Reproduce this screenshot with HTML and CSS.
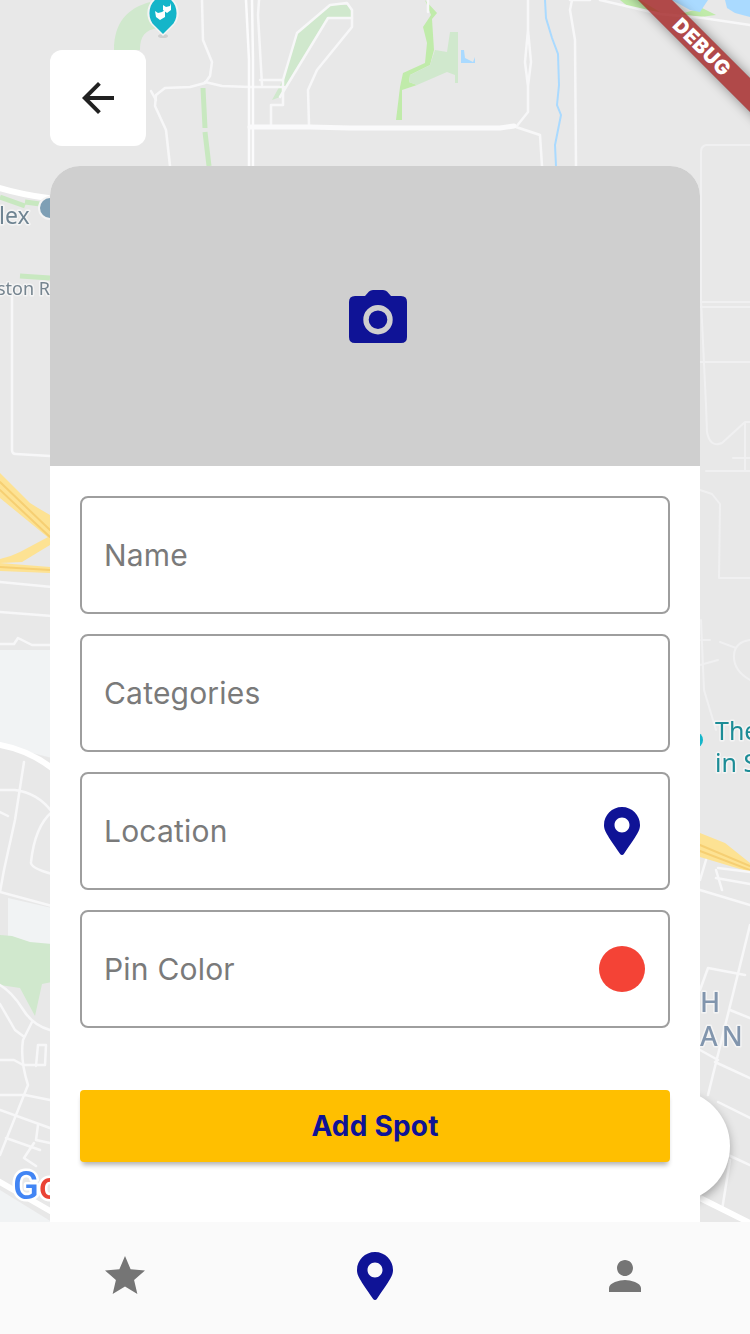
FILE: index.html
```html
<!DOCTYPE html>
<html lang="en">
<head>
<meta charset="utf-8">
<title>Add Spot</title>
<link rel="stylesheet" href="styles.css">
</head>
<body>
<div class="app">
  <svg class="map" viewBox="0 0 750 1334" width="750" height="1334" aria-hidden="true">
    <rect class="land" width="750" height="1334"/>
    <path class="pale" d="M0 650H52V758L0 745Z"/>
    <path class="pale" d="M8 898L52 908V962H8Z"/>
    <path class="pale" d="M0 1190L52 1222H0Z"/>

    <!-- parks -->
    <path class="park" d="M150 2C128 8 114 22 114 50H140C140 36 145 30 158 28Z"/>
    <path class="park" d="M272 100L283 80L297 33L330 5H350L352 18H328L280 97Z"/>
    <path class="parkline" d="M203 88L205 128M205 132L209 166"/>
    <path class="park-bright" d="M425 0L437 13L432 19L434 50L430 65L410 75L409 82L417 85L402 90L402 120L396 120L400 87L403 73L425 63L427 43L423 27L431 15Z"/>
    <path class="park" d="M450 32H458V83H455V75L447 72L417 85L409 82L410 75L430 65L435 50L447 52Z"/>
    <path class="park" d="M0 935L12 936L30 942L52 944V982L42 984L35 1016L20 988L0 985Z"/>
    <path class="park-bright" d="M620 0H640L660 12L630 8Z"/>
    <path class="park-bright" d="M680 14L702 8L716 15L700 17Z"/>
    <path class="water" d="M672 0H708L700 12L690 10Z"/>
    <path class="water" d="M725 0H750V17L735 13L727 8Z"/>
    <path class="parkline" d="M0 197L25 206M25 202L48 205M20 276L50 278"/>

    <!-- water -->
    <path class="river" d="M545 0L546 18L552 38L558 54L559 85L557 105L561 115L559 125L555 145L556 166"/>
    <path class="water" d="M461 50H464L465 58L473 62L475 57L475 63H461Z"/>

    <!-- minor roads -->
    <path class="road" d="M202 0L203 40L212 62L210 76L205 83L190 87L165 88L156 95L155 106L166 130L170 166"/>
    <path class="road" d="M151 91L156 100M205 82L222 86L250 87H284M259 0L258 15L262 85M283 80V105H271V125M309 125L308 90L317 70L352 27V10L347 3L330 5L297 33L283 80"/>
    <path class="road" d="M352 18H328L280 97M260 80H283M428 12V0"/>
    <path class="road" d="M528 0V30L525 62L528 86L528 112L516 127L540 135L542 166M528 30L531 62L528 86"/>
    <path class="road" d="M572 0L570 10L575 40L576 166M570 0H590M600 0L660 14L703 18L750 25"/>
    <path class="road-thin" d="M750 145H706Q701 146 701 152V300L706 405L707 432Q710 448 722 443L745 422H750M745 422V471M706 471H750M733 458H750"/>
    <path class="road-thin" d="M700 302H750M700 307H750M700 362H750"/>
    <path class="road-thin" d="M700 490L712 494L720 504L719 578H750M701 620L704 690L716 730M701 640L710 640M750 640Q735 642 734 655Q733 670 750 680M720 642L736 648M700 665L718 660"/>

    <!-- main roads -->
    <path class="road-main" d="M246 0L249 60L249 166M252 0L253 60L253 166"/>
    <path class="road-wide" d="M250 127H310L350 128H500L514 126"/>
    <path class="road-major" d="M0 188Q20 194 48 198"/>
    <path class="road" d="M12 296V450Q12 454 16 454L50 456"/>

    <!-- yellow highway -->
    <path class="hw-fill" d="M0 473L30 503L38 508L50 515V539L0 498Z"/>
    <path class="hw-fill" d="M0 559Q10 557 20 552L50 536V545L22 562L0 563Z"/>
    <path class="hw-fill" d="M0 563L50 567V573L0 571Z"/>
    <path class="hw-core" d="M0 482L50 530M0 490L50 537M0 567L50 570"/>
    <path class="hw-fill" d="M700 833L725 843L750 863V872L700 857Z"/>
    <path class="hw-core" d="M700 845L750 866M700 851L750 870"/>

    <path class="road" d="M0 582L52 587M0 612L52 616M0 644H14L18 638L32 645H52"/>

    <!-- lower left grid -->
    <path class="road-major" d="M0 745Q28 750 52 768"/>
    <path class="road" d="M24 762L15 820L4 870L0 892M0 790L15 790Q38 793 52 812M0 812L8 816M52 812Q35 826 31 862Q30 868 52 874M0 892L52 906"/>
    <path class="road" d="M0 985Q12 992 22 1008Q32 1025 50 1030M32 1022L23 1040Q20 1060 28 1085L0 1155M0 1004L15 1030L23 1036M0 1060H14L23 1065H45L46 1045L38 1045L36 1066M0 1095H25L50 1100M0 1110L50 1128M38 1125L36 1140L50 1143M6 1138L40 1150M34 1143L24 1158L36 1166"/>
    <path class="road-major" d="M0 1182L52 1212"/>

    <!-- lower right grid -->
    <path class="road" d="M700 890L750 905M750 925L708 1095M745 975L708 968L700 990M730 1010L750 1018M700 1050L718 1060L715 1062L750 1078M718 1102L750 1118M730 1160L722 1210M728 1155L750 1165M700 880L706 860M716 870L722 890"/>
    <path class="road" d="M718 868L750 872M716 878L750 884"/>
    <path class="road-major" d="M700 1198L752 1224"/>

    <!-- pins and labels -->
    <ellipse class="pin-shadow" cx="163" cy="36" rx="5" ry="2"/>
    <path class="pin-halo" d="M163 36L154 27C142 18 147 -4 163 -4S184 18 172 27Z"/>
    <path class="pin-teal" d="M163 34L155 26C145 18 149 -3 163 -3S181 18 171 26Z"/>
    <path class="pin-face" d="M155 11L158 13L162 12L165 10V17L160 20L156 17ZM163 5L166 7L170 6L171 3V10L167 13L163 10Z"/>
    <circle class="poi-halo" cx="50" cy="208" r="12"/>
    <circle class="poi" cx="50" cy="208" r="10"/>
    <circle class="poi-teal" cx="695" cy="740" r="8"/>
    <text class="label label-dark" x="-1" y="224">lex</text>
    <text class="label label-small" x="-3" y="295">ston R</text>
    <text class="label label-teal" x="715" y="740">The</text>
    <text class="label label-teal" x="715" y="772">in S</text>
    <text class="label label-blue" x="700" y="1012">H</text>
    <text class="label label-blue" x="700" y="1046">AN</text>
    <text class="logo" x="13" y="1199"><tspan class="logo-g">G</tspan><tspan class="logo-o">o</tspan></text>
  </svg>

  <div class="fab"></div>

  <main class="main">
    <button class="back" type="button" aria-label="Back">
      <svg class="back-icon" viewBox="0 0 24 24"><path d="M20 11H7.83l5.59-5.59L12 4l-8 8 8 8 1.41-1.41L7.83 13H20v-2z"/></svg>
    </button>
    <section class="card">
      <div class="photo">
        <svg class="camera" viewBox="0 0 58 53">
          <path class="camera-body" d="M16 6L20 1.6Q21.5 0 24 0H34Q36.500 0 38 1.600L42 6H52Q58 6 58 12V47Q58 53 52 53H6Q0 53 0 47V12Q0 6 6 6Z"/>
          <circle class="camera-ring" cx="29" cy="29.700" r="12"/>
        </svg>
      </div>
      <form class="form">
        <div class="field"><span class="field-label">Name</span></div>
        <div class="field"><span class="field-label">Categories</span></div>
        <div class="field">
          <span class="field-label">Location</span>
          <span class="field-icon">
            <svg class="pin" viewBox="0 0 384 512"><path d="M172.268 501.670C26.970 291.031 0 252.117 0 192 0 85.961 85.961 0 192 0s192 85.961 192 192c0 60.117-26.970 99.031-172.268 309.670-9.535 13.774-29.930 13.773-39.464 0zM192 272c44.183 0 80-35.817 80-80s-35.817-80-80-80-80 35.817-80 80 35.817 80 80 80z"/></svg>
          </span>
        </div>
        <div class="field">
          <span class="field-label">Pin Color</span>
          <span class="field-icon"><span class="color-dot"></span></span>
        </div>
        <button class="submit" type="button">Add Spot</button>
      </form>
    </section>
  </main>

  <nav class="nav">
    <svg class="nav-icon" viewBox="0 0 24 24"><path d="M12 17.270L18.180 21l-1.640-7.030L22 9.240l-7.190-.610L12 2 9.190 8.630 2 9.240l5.460 4.730L5.820 21z"/></svg>
    <svg class="pin nav-pin" viewBox="0 0 384 512"><path d="M172.268 501.670C26.970 291.031 0 252.117 0 192 0 85.961 85.961 0 192 0s192 85.961 192 192c0 60.117-26.970 99.031-172.268 309.670-9.535 13.774-29.930 13.773-39.464 0zM192 272c44.183 0 80-35.817 80-80s-35.817-80-80-80-80 35.817-80 80 35.817 80 80 80z"/></svg>
    <svg class="nav-icon" viewBox="0 0 24 24"><path d="M12 12c2.210 0 4-1.790 4-4s-1.790-4-4-4-4 1.790-4 4 1.790 4 4 4zm0 2c-2.670 0-8 1.340-8 4v2h16v-2c0-2.660-5.330-4-8-4z"/></svg>
  </nav>

  <div class="banner-clip"><div class="banner">DEBUG</div></div>
</div>
</body>
</html>
```

FILE: styles.css
```css
* { box-sizing: border-box; }

html, body {
  margin: 0;
  padding: 0;
}

body {
  width: 750px;
  height: 1334px;
  overflow: hidden;
  font-family: Inter, "Liberation Sans", sans-serif;
}

.app {
  position: relative;
  width: 750px;
  height: 1334px;
  display: flex;
  flex-direction: column;
  overflow: hidden;
  background: #e8e8e8;
}

/* Map backdrop */
.map {
  position: absolute;
  inset: 0;
  display: block;
  filter: blur(0.6px);
}

.land { fill: #e8e8e8; }
.pale { fill: #f1f3f4; }
.park { fill: #d0e8cd; }
.park-bright { fill: #c0ebaa; }
.parkline { fill: none; stroke: #c8e8c0; stroke-width: 5; }
.water { fill: #aadaff; }
.river { fill: none; stroke: #aadaff; stroke-width: 2; }

.road, .road-thin, .road-main, .road-wide, .road-major, .hw-core {
  fill: none;
  stroke-linecap: round;
  stroke-linejoin: round;
}

.road { stroke: #f7f7f8; stroke-width: 2.500; }
.road-thin { stroke: #f0f0f1; stroke-width: 2; }
.road-main { stroke: #fbfbfc; stroke-width: 2.500; }
.road-wide { stroke: #fafafb; stroke-width: 5; }
.road-major { stroke: #ffffff; stroke-width: 6; }
.hw-fill { fill: #fde293; }
.hw-core { stroke: #f6cf73; stroke-width: 2; }

.pin-shadow { fill: #cfcfcf; }
.pin-halo { fill: #f4f4f4; }
.pin-teal { fill: #14b5c9; }
.pin-face { fill: #ffffff; }
.poi-halo { fill: #f4f4f4; }
.poi { fill: #7e9fb5; }
.poi-teal { fill: #14b5c9; }

.label {
  font-family: "Noto Sans", Roboto, sans-serif;
  paint-order: stroke;
  stroke: #f4f4f4;
  stroke-width: 3;
  stroke-linejoin: round;
}
.label-dark { font-size: 23px; fill: #6f8492; }
.label-small { font-size: 18px; fill: #75848f; }
.label-teal { font-size: 25px; fill: #1c8c96; }
.label-blue {
  font-size: 27px;
  font-weight: 500;
  letter-spacing: 4px;
  fill: #8195ad;
}

.logo {
  font-family: Roboto, "Open Sans", sans-serif;
  font-size: 38px;
  font-weight: 500;
  paint-order: stroke;
  stroke: #ffffff;
  stroke-width: 5;
  stroke-linejoin: round;
}
.logo-g { fill: #4285f4; }
.logo-o { fill: #ea4335; }

/* Floating button behind the card */
.fab {
  position: absolute;
  left: 618px;
  top: 1090px;
  width: 112px;
  height: 112px;
  border-radius: 50%;
  background: #fff;
  box-shadow: 0 4px 10px rgba(0, 0, 0, 0.3);
}

/* Sheet */
.main {
  position: relative;
  flex: 1;
  min-height: 0;
  display: flex;
  flex-direction: column;
  gap: 20px;
  padding: 50px 50px 0;
}

.back {
  flex: none;
  width: 96px;
  height: 96px;
  display: flex;
  align-items: center;
  justify-content: center;
  padding: 0;
  border: 0;
  border-radius: 12px;
  background: #fff;
}

.back-icon {
  width: 48px;
  height: 48px;
  fill: #212121;
}

.card {
  flex: 1;
  min-height: 0;
  display: flex;
  flex-direction: column;
  border-radius: 30px 30px 0 0;
  overflow: hidden;
  background: #fff;
}

.photo {
  flex: none;
  height: 300px;
  display: flex;
  align-items: center;
  justify-content: center;
  background: #cfcfcf;
}

.camera {
  width: 58px;
  height: 53px;
  margin-left: 6px;
}
.camera-body { fill: #0f1396; }
.camera-ring { fill: none; stroke: #cfcfcf; stroke-width: 5.400; }

.form {
  display: flex;
  flex-direction: column;
  gap: 20px;
  padding: 30px;
}

.field {
  height: 118px;
  display: flex;
  align-items: center;
  justify-content: space-between;
  padding: 0 22px;
  border: 2px solid #9e9e9e;
  border-radius: 8px;
}

.field-label {
  font-size: 30px;
  letter-spacing: 0.2px;
  color: #7a7a7a;
}

.field-icon {
  width: 48px;
  height: 48px;
  display: flex;
  align-items: center;
  justify-content: center;
}

.pin {
  display: block;
  width: 36px;
  height: 48px;
  fill: #0f1396;
}

.color-dot {
  width: 46px;
  height: 46px;
  border-radius: 50%;
  background: #f44336;
}

.submit {
  height: 72px;
  margin-top: 42px;
  border: 0;
  border-radius: 4px;
  background: #ffbf00;
  box-shadow: 0 5px 5px -2px rgba(0, 0, 0, 0.3);
  font-family: inherit;
  font-size: 28px;
  font-weight: 700;
  letter-spacing: 0.2px;
  color: #0f1396;
}

/* Bottom navigation */
.nav {
  position: relative;
  flex: none;
  height: 112px;
  display: grid;
  grid-template-columns: repeat(3, 1fr);
  justify-items: center;
  align-items: center;
  padding-bottom: 4px;
  background: #fafafa;
}

.nav-icon {
  width: 48px;
  height: 48px;
  fill: #757575;
}

/* Debug ribbon */
.banner-clip {
  position: absolute;
  top: 0;
  right: 0;
  width: 160px;
  height: 160px;
  overflow: hidden;
  pointer-events: none;
}

.banner {
  position: absolute;
  left: -28px;
  top: 35px;
  width: 280px;
  height: 24px;
  transform: rotate(45deg);
  background: rgba(160, 28, 28, 0.78);
  box-shadow: 0 0 12px rgba(0, 0, 0, 0.4);
  font-size: 20px;
  font-weight: 900;
  letter-spacing: 0.5px;
  line-height: 24px;
  text-align: center;
  color: #fff;
}
```
